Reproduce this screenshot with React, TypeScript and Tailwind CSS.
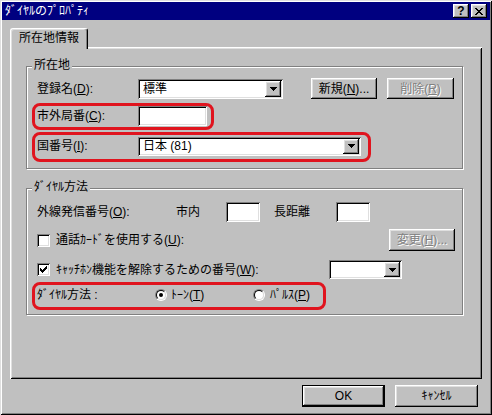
import React from "react";

const raised =
  "shadow-[inset_-1px_-1px_0_#000,inset_1px_1px_0_#fff,inset_-2px_-2px_0_#808080,inset_2px_2px_0_#dfdfdf]";
const sunken =
  "shadow-[inset_1px_1px_0_#808080,inset_-1px_-1px_0_#fff,inset_2px_2px_0_#000,inset_-2px_-2px_0_#dfdfdf]";

function U({ children }: { children: React.ReactNode }) {
  return <u className="underline-offset-[1px]">{children}</u>;
}

function Arrow() {
  return (
    <svg width="7" height="4" viewBox="0 0 7 4" className="block" shapeRendering="crispEdges">
      <path d="M0 0h7v1h-1v1h-1v1h-1v1h-1v-1h-1v-1h-1v-1h-1z" fill="#000" />
    </svg>
  );
}

function Combo({ size, text }: { size: string; text?: string }) {
  return (
    <div className={`flex bg-white p-[2px] shrink-0 ${sunken} ${size}`}>
      <div className="flex-1 flex items-center pl-[3px] whitespace-nowrap">{text}</div>
      <div className={`w-[16px] h-full flex items-center justify-center bg-[#c0c0c0] ${raised}`}>
        <Arrow />
      </div>
    </div>
  );
}

function Edit({ size }: { size: string }) {
  return <div className={`bg-white shrink-0 ${sunken} ${size}`} />;
}

function Btn({
  size,
  children,
  disabled,
  def,
}: {
  size: string;
  children: React.ReactNode;
  disabled?: boolean;
  def?: boolean;
}) {
  return (
    <div
      className={`flex items-center justify-center shrink-0 whitespace-nowrap bg-[#c0c0c0] ${raised} ${size} ${
        def ? "border border-black" : ""
      } ${disabled ? "text-[#808080] [text-shadow:1px_1px_0_#fff]" : "text-black"}`}
    >
      {children}
    </div>
  );
}

function Check({ checked }: { checked?: boolean }) {
  return (
    <div className={`w-[13px] h-[13px] bg-white flex items-center justify-center shrink-0 ${sunken}`}>
      {checked && (
        <svg width="7" height="7" viewBox="0 0 7 7" shapeRendering="crispEdges" className="block">
          <path
            d="M6 0h1v1h-1z M5 1h2v1h-2z M0 2h1v1h-1z M4 2h3v1h-3z M0 3h2v1h-2z M3 3h3v1h-3z M0 4h5v1h-5z M1 5h3v1h-3z M2 6h1v1h-1z"
            fill="#000"
          />
        </svg>
      )}
    </div>
  );
}

function Radio({ checked }: { checked?: boolean }) {
  return (
    <div className="w-[12px] h-[12px] rounded-full border border-[#808080] border-r-white border-b-white shrink-0">
      <div className="w-full h-full rounded-full border border-black border-r-[#dfdfdf] border-b-[#dfdfdf] bg-white flex items-center justify-center">
        {checked && <div className="w-[4px] h-[4px] rounded-full bg-black" />}
      </div>
    </div>
  );
}

export default function App() {
  return (
    <div className="w-[492px] h-[415px] bg-[#c0c0c0] p-[2px] shadow-[inset_1px_1px_0_#dfdfdf,inset_-1px_-1px_0_#000,inset_2px_2px_0_#fff,inset_-2px_-2px_0_#808080] font-['Liberation_Sans','Noto_Sans_CJK_JP',sans-serif] text-[12px] leading-[14px] text-black flex flex-col">
      {/* Title bar */}
      <div className="h-[18px] bg-[#000080] flex items-center pl-[3px] pr-[3px]">
        <span className="text-white flex-1 whitespace-nowrap">ﾀﾞｲﾔﾙのﾌﾟﾛﾊﾟﾃｨ</span>
        <div
          className={`w-[16px] h-[14px] bg-[#c0c0c0] flex items-center justify-center text-[12px] font-bold leading-none ${raised}`}
        >
          ?
        </div>
        <div className={`ml-[2px] w-[16px] h-[14px] bg-[#c0c0c0] flex items-center justify-center ${raised}`}>
          <svg width="8" height="7" viewBox="0 0 8 7" shapeRendering="crispEdges" className="block">
            <path
              d="M0 0h2v1h-2z M6 0h2v1h-2z M1 1h2v1h-2z M5 1h2v1h-2z M2 2h4v1h-4z M3 3h2v1h-2z M2 4h4v1h-4z M1 5h2v1h-2z M5 5h2v1h-2z M0 6h2v1h-2z M6 6h2v1h-2z"
              fill="#000"
            />
          </svg>
        </div>
      </div>

      <div className="px-[8px] pt-[8px] flex flex-col">
        {/* Tab */}
        <div className="flex">
          <div className="relative z-10 -mb-[2px] h-[21px] w-[78px] bg-[#c0c0c0] border-l border-t border-r border-l-white border-t-white border-r-black rounded-t-[3px] shadow-[inset_-1px_0_0_#808080,inset_1px_1px_0_#dfdfdf] flex items-center justify-center pb-[2px] whitespace-nowrap">
            所在地情報
          </div>
        </div>

        {/* Panel */}
        <div className="h-[332px] bg-[#c0c0c0] shadow-[inset_1px_1px_0_#fff,inset_-1px_-1px_0_#000,inset_2px_2px_0_#dfdfdf,inset_-2px_-2px_0_#808080] pl-[16px] pt-[19px] flex flex-col">
          {/* Group 1 */}
          <div className="relative w-[437px] h-[103px] border border-[#808080] shadow-[1px_1px_0_#fff,inset_1px_1px_0_#fff] pl-[10px] pt-[11px] flex flex-col">
            <span className="absolute left-[5px] top-[-9px] bg-[#c0c0c0] px-[2px] whitespace-nowrap">所在地</span>

            <div className="flex items-center h-[21px]">
              <span className="w-[101px] whitespace-nowrap">
                登録名(<U>D</U>):
              </span>
              <Combo size="w-[145px] h-[20px]" text="標準" />
              <Btn size="ml-[28px] w-[66px] h-[21px]">
                新規(<U>N</U>)...
              </Btn>
              <Btn size="ml-[10px] w-[67px] h-[21px]" disabled>
                削除(<U>R</U>)
              </Btn>
            </div>

            <div className="flex items-center h-[20px] mt-[7px]">
              <span className="w-[101px] whitespace-nowrap">
                市外局番(<U>C</U>):
              </span>
              <Edit size="w-[69px] h-[20px]" />
            </div>

            <div className="flex items-center h-[20px] mt-[10px]">
              <span className="w-[101px] whitespace-nowrap">
                国番号(<U>I</U>):
              </span>
              <Combo size="w-[223px] h-[19px]" text="日本 (81)" />
            </div>

            <div className="absolute left-[5px] top-[36px] w-[182px] h-[27px] border-[3px] border-[#e0141e] rounded-[8px] pointer-events-none" />
            <div className="absolute left-[5px] top-[65px] w-[339px] h-[30px] border-[3px] border-[#e0141e] rounded-[8px] pointer-events-none" />
          </div>

          {/* Group 2 */}
          <div className="relative mt-[19px] w-[437px] h-[127px] border border-[#808080] shadow-[1px_1px_0_#fff,inset_1px_1px_0_#fff] pl-[10px] pr-[7px] pt-[13px] flex flex-col">
            <span className="absolute left-[5px] top-[-9px] bg-[#c0c0c0] px-[2px] whitespace-nowrap">ﾀﾞｲﾔﾙ方法</span>

            <div className="flex items-center h-[20px]">
              <span className="w-[139px] whitespace-nowrap">
                外線発信番号(<U>O</U>):
              </span>
              <span className="w-[50px] whitespace-nowrap">市内</span>
              <Edit size="w-[34px] h-[20px]" />
              <span className="ml-[14px] w-[62px] whitespace-nowrap">長距離</span>
              <Edit size="w-[34px] h-[20px]" />
            </div>

            <div className="flex items-center h-[22px] mt-[7px]">
              <Check />
              <span className="ml-[6px] whitespace-nowrap">
                通話ｶｰﾄﾞを使用する(<U>U</U>):
              </span>
              <Btn size="ml-auto w-[66px] h-[22px]" disabled>
                変更(<U>H</U>)...
              </Btn>
            </div>

            <div className="flex items-center h-[19px] mt-[9px]">
              <div className="w-[292px] flex items-center">
                <Check checked />
                <span className="ml-[6px] whitespace-nowrap">
                  ｷｬｯﾁﾎﾝ機能を解除するための番号(<U>W</U>):
                </span>
              </div>
              <Combo size="w-[73px] h-[19px]" />
            </div>

            <div className="flex items-center h-[16px] mt-[8px]">
              <span className="w-[118px] whitespace-nowrap">ﾀﾞｲﾔﾙ方法 :</span>
              <div className="w-[98px] flex items-center">
                <Radio checked />
                <span className="ml-[4px] whitespace-nowrap">
                  ﾄｰﾝ(<U>T</U>)
                </span>
              </div>
              <div className="flex items-center">
                <Radio />
                <span className="ml-[5px] whitespace-nowrap">
                  ﾊﾟﾙｽ(<U>P</U>)
                </span>
              </div>
            </div>

            <div className="absolute left-[5px] top-[93px] w-[294px] h-[28px] border-[3px] border-[#e0141e] rounded-[8px] pointer-events-none" />
          </div>
        </div>

        {/* Bottom buttons */}
        <div className="flex justify-end gap-[10px] mt-[6px] pr-[4px]">
          <Btn size="w-[83px] h-[22px]" def>
            OK
          </Btn>
          <Btn size="w-[83px] h-[22px]">ｷｬﾝｾﾙ</Btn>
        </div>
      </div>
    </div>
  );
}
